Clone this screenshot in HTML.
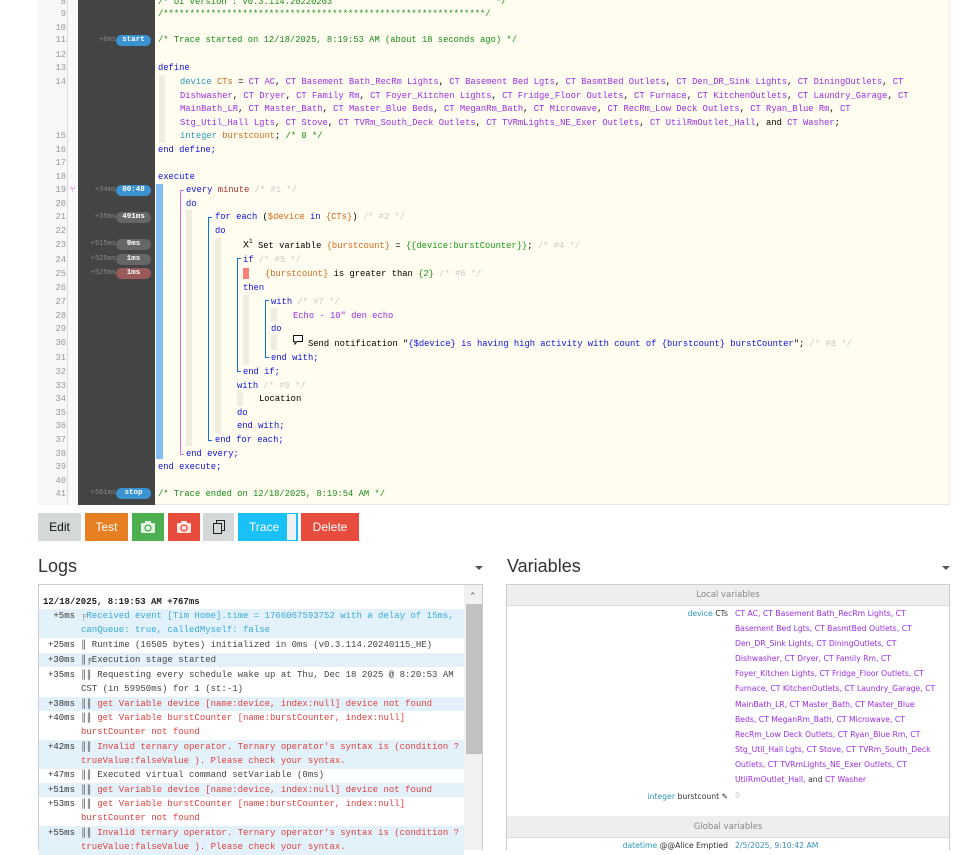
<!DOCTYPE html>
<html><head><meta charset="utf-8">
<style>
*{margin:0;padding:0;box-sizing:border-box}
body{width:976px;height:850px;background:#fff;position:relative;overflow:hidden;font-family:"Liberation Sans",sans-serif}
.a{position:absolute}
#code .l{position:absolute;font-family:"Liberation Mono",monospace;font-size:8.8px;line-height:12px;white-space:pre;color:#000}
.ln{position:absolute;left:38px;width:28px;text-align:right;font-family:"Liberation Mono",monospace;font-size:8.8px;color:#999;line-height:12px}
.k{color:#1010e0}.c{color:#1a8a1a}.d{color:#c8c8c8}.o{color:#d2691e}.p{color:#9a2ee6}.t{color:#2a9ab8}.m{color:#b03030}.g{color:#1a9a1a}
.bd{position:absolute;left:116px;width:35px;height:11px;border-radius:6px;color:#fff;font-family:"Liberation Mono",monospace;font-size:7.5px;font-weight:bold;text-align:center;line-height:11px}
.tm{position:absolute;width:40px;left:76px;text-align:right;font-family:"Liberation Mono",monospace;font-size:7px;color:#888;line-height:11px}
.btn{position:absolute;top:513px;height:28px;color:#fff;font-size:12px;line-height:28px;text-align:center}
.lr{position:absolute;left:39px;width:425px;font-family:"Liberation Mono",monospace;font-size:9px;line-height:14px;color:#444}
.lr .tt{position:absolute;left:0;width:36px;text-align:right;color:#333}
.lr .mm{margin-left:42px;display:block}
.b{background:#e3f2fa}
.r{color:#e04040}.cy{color:#3aaad8}
.vr{position:absolute;font-family:"DejaVu Sans",sans-serif;font-size:7.7px;line-height:15.1px;color:#333;white-space:nowrap}
.vp{color:#9a2ee6}
</style></head><body>
<div class="a" style="left:38px;top:0;width:912px;height:505px;background:#fffdf0;border-bottom:1px solid #e8e8e8;border-right:1px solid #eee"></div>
<div class="a" style="left:38px;top:0;width:29px;height:505px;background:#f7f7f7"></div>
<div class="a" style="left:67px;top:0;width:1px;height:505px;background:#ddd"></div>
<div class="a" style="left:68px;top:0;width:10px;height:505px;background:#fafafa"></div>
<div class="a" style="left:78px;top:0;width:77px;height:505px;background:#444"></div>
<div id="code">
<div class="a" style="left:156px;top:184px;width:7px;height:275px;background:#84bdf5"></div>
<div class="a" style="left:180px;top:190px;width:1px;height:264px;background:#e070e0"></div>
<div class="a" style="left:180px;top:190px;width:4px;height:1px;background:#e070e0"></div>
<div class="a" style="left:180px;top:454px;width:4px;height:1px;background:#e070e0"></div>
<div class="a" style="left:186px;top:210px;width:6px;height:236px;background:#f0ede0"></div>
<div class="a" style="left:208px;top:217px;width:1px;height:224px;background:#1070e0"></div>
<div class="a" style="left:208px;top:217px;width:4px;height:1px;background:#1070e0"></div>
<div class="a" style="left:208px;top:440px;width:4px;height:1px;background:#1070e0"></div>
<div class="a" style="left:215px;top:238px;width:6px;height:195px;background:#f0ede0"></div>
<div class="a" style="left:237px;top:258px;width:1px;height:113px;background:#1070e0"></div>
<div class="a" style="left:237px;top:258px;width:4px;height:1px;background:#1070e0"></div>
<div class="a" style="left:237px;top:371px;width:4px;height:1px;background:#1070e0"></div>
<div class="a" style="left:243px;top:268px;width:6px;height:11px;background:#ff8078"></div>
<div class="a" style="left:243px;top:295px;width:6px;height:70px;background:#f0ede0"></div>
<div class="a" style="left:265px;top:300px;width:1px;height:58px;background:#1070e0"></div>
<div class="a" style="left:265px;top:300px;width:4px;height:1px;background:#1070e0"></div>
<div class="a" style="left:265px;top:357px;width:4px;height:1px;background:#1070e0"></div>
<div class="a" style="left:271px;top:308px;width:6px;height:14px;background:#f0ede0"></div>
<div class="a" style="left:271px;top:335px;width:6px;height:15px;background:#f0ede0"></div>
<div class="a" style="left:237px;top:392px;width:6px;height:14px;background:#f0ede0"></div>
<div class="a" style="left:159px;top:75px;width:6px;height:68px;background:#f0ede0"></div>

<div class="ln" style="top:-4px">8</div><div class="l" style="left:158px;top:-4px"><span class="c">/* UI version : v0.3.114.20220203                               */</span></div>
<div class="ln" style="top:8px">9</div><div class="l" style="left:158px;top:8px"><span class="c">/*************************************************************/</span></div>
<div class="ln" style="top:22px">10</div>
<div class="ln" style="top:34px">11</div><div class="tm" style="top:35px">+0ms</div><div class="bd" style="top:35px;background:#3a92d0">start</div><div class="l" style="left:158px;top:34px"><span class="c">/* Trace started on 12/18/2025, 8:19:53 AM (about 18 seconds ago) */</span></div>
<div class="ln" style="top:49px">12</div>
<div class="ln" style="top:62px">13</div><div class="l" style="left:158px;top:62px"><span class="k">define</span></div>
<div class="ln" style="top:76px">14</div>
<div class="l" style="left:180px;top:76px"><span class="t">device</span> <span class="o">CTs</span> = <span class="p">CT AC</span>, <span class="p">CT Basement Bath_RecRm Lights</span>, <span class="p">CT Basement Bed Lgts</span>, <span class="p">CT BasmtBed Outlets</span>, <span class="p">CT Den_DR_Sink Lights</span>, <span class="p">CT DiningOutlets</span>, <span class="p">CT</span></div>
<div class="l" style="left:180px;top:90px"><span class="p">Dishwasher</span>, <span class="p">CT Dryer</span>, <span class="p">CT Family Rm</span>, <span class="p">CT Foyer_Kitchen Lights</span>, <span class="p">CT Fridge_Floor Outlets</span>, <span class="p">CT Furnace</span>, <span class="p">CT KitchenOutlets</span>, <span class="p">CT Laundry_Garage</span>, <span class="p">CT</span></div>
<div class="l" style="left:180px;top:103px"><span class="p">MainBath_LR</span>, <span class="p">CT Master_Bath</span>, <span class="p">CT Master_Blue Beds</span>, <span class="p">CT MeganRm_Bath</span>, <span class="p">CT Microwave</span>, <span class="p">CT RecRm_Low Deck Outlets</span>, <span class="p">CT Ryan_Blue Rm</span>, <span class="p">CT</span></div>
<div class="l" style="left:180px;top:117px"><span class="p">Stg_Util_Hall Lgts</span>, <span class="p">CT Stove</span>, <span class="p">CT TVRm_South_Deck Outlets</span>, <span class="p">CT TVRmLights_NE_Exer Outlets</span>, <span class="p">CT UtilRmOutlet_Hall</span>, and <span class="p">CT Washer</span>;</div>
<div class="ln" style="top:130px">15</div><div class="l" style="left:180px;top:130px"><span class="t">integer</span> <span class="o">burstcount</span>; <span class="c">/* 0 */</span></div>
<div class="ln" style="top:144px">16</div><div class="l" style="left:158px;top:144px"><span class="k">end define;</span></div>
<div class="ln" style="top:157px">17</div>
<div class="ln" style="top:171px">18</div><div class="l" style="left:158px;top:171px"><span class="k">execute</span></div>
<div class="ln" style="top:184px">19</div><div class="a" style="left:70px;top:184px;color:#d050d0;font-size:9px">⑂</div><div class="tm" style="top:185px">+34ms</div><div class="bd" style="top:185px;background:#3a92d0">00:48</div><div class="l" style="left:186px;top:184px"><span class="k">every</span> <span class="m">minute</span> <span class="d">/* #1 */</span></div>
<div class="ln" style="top:198px">20</div><div class="l" style="left:186px;top:198px"><span class="k">do</span></div>
<div class="ln" style="top:211px">21</div><div class="tm" style="top:212px">+35ms</div><div class="bd" style="top:212px;background:#666">491ms</div><div class="l" style="left:215px;top:211px"><span class="k">for each</span> (<span class="o">$device</span> <span class="k">in</span> <span class="o">{CTs}</span>) <span class="d">/* #2 */</span></div>
<div class="ln" style="top:225px">22</div><div class="l" style="left:215px;top:225px"><span class="k">do</span></div>
<div class="ln" style="top:239px">23</div><div class="tm" style="top:239px">+515ms</div><div class="bd" style="top:239px;background:#666">9ms</div><div class="l" style="left:243px;top:236px;font-size:10px">X<sup style="font-size:6px">1</sup></div><div class="l" style="left:258px;top:240px">Set variable <span class="o">{burstcount}</span> = <span class="g">{{device:burstCounter}}</span>; <span class="d">/* #4 */</span></div>
<div class="ln" style="top:254px">24</div><div class="tm" style="top:254px">+525ms</div><div class="bd" style="top:254px;background:#666">1ms</div><div class="l" style="left:243px;top:254px"><span class="k">if</span> <span class="d">/* #5 */</span></div>
<div class="ln" style="top:268px">25</div><div class="tm" style="top:268px">+525ms</div><div class="bd" style="top:268px;background:#9a5a5a">1ms</div><div class="l" style="left:265px;top:268px"><span class="o">{burstcount}</span> is greater than <span class="g">{2}</span> <span class="d">/* #6 */</span></div>
<div class="ln" style="top:282px">26</div><div class="l" style="left:243px;top:282px"><span class="k">then</span></div>
<div class="ln" style="top:296px">27</div><div class="l" style="left:271px;top:296px"><span class="k">with</span> <span class="d">/* #7 */</span></div>
<div class="ln" style="top:310px">28</div><div class="l" style="left:293px;top:310px"><span class="p">Echo - 10" den echo</span></div>
<div class="ln" style="top:323px">29</div><div class="l" style="left:271px;top:323px"><span class="k">do</span></div>
<div class="ln" style="top:337px">30</div>
<svg class="a" style="left:293px;top:335px" width="10" height="10" viewBox="0 0 10 10"><path d="M0.5 0.5H9.5V6.5H4L2 9V6.5H0.5Z" fill="#fff" stroke="#111" stroke-width="1"/></svg>
<div class="l" style="left:308px;top:338px">Send notification "<span class="k">{$device} is having high activity with count of {burstcount} burstCounter</span>"; <span class="d">/* #8 */</span></div>
<div class="ln" style="top:352px">31</div><div class="l" style="left:271px;top:352px"><span class="k">end with;</span></div>
<div class="ln" style="top:366px">32</div><div class="l" style="left:243px;top:366px"><span class="k">end if;</span></div>
<div class="ln" style="top:380px">33</div><div class="l" style="left:237px;top:380px"><span class="k">with</span> <span class="d">/* #9 */</span></div>
<div class="ln" style="top:393px">34</div><div class="l" style="left:259px;top:393px">Location</div>
<div class="ln" style="top:407px">35</div><div class="l" style="left:237px;top:407px"><span class="k">do</span></div>
<div class="ln" style="top:420px">36</div><div class="l" style="left:237px;top:420px"><span class="k">end with;</span></div>
<div class="ln" style="top:434px">37</div><div class="l" style="left:215px;top:434px"><span class="k">end for each;</span></div>
<div class="ln" style="top:448px">38</div><div class="l" style="left:186px;top:448px"><span class="k">end every;</span></div>
<div class="ln" style="top:461px">39</div><div class="l" style="left:158px;top:461px"><span class="k">end execute;</span></div>
<div class="ln" style="top:475px">40</div>
<div class="ln" style="top:488px">41</div><div class="tm" style="top:488px">+561ms</div><div class="bd" style="top:488px;background:#3a92d0">stop</div><div class="l" style="left:158px;top:488px"><span class="c">/* Trace ended on 12/18/2025, 8:19:54 AM */</span></div>
</div>

<div class="btn" style="left:38px;width:43px;background:#d5d8d8;color:#111">Edit</div>
<div class="btn" style="left:85px;width:43px;background:#e67e22">Test</div>
<div class="btn" style="left:132px;width:32px;background:#4caf50"><svg width="14" height="12" viewBox="0 0 14 12" style="margin-top:8px"><rect x="0" y="2" width="14" height="10" rx="1" fill="#fff" opacity=".85"/><rect x="4" y="0" width="6" height="3" fill="#fff" opacity=".85"/><circle cx="7" cy="7" r="3" fill="none" stroke="#4caf50" stroke-width="1.3"/></svg></div>
<div class="btn" style="left:168px;width:32px;background:#e74c3c"><svg width="14" height="12" viewBox="0 0 14 12" style="margin-top:8px"><rect x="0" y="2" width="14" height="10" rx="1" fill="#fff" opacity=".85"/><rect x="4" y="0" width="6" height="3" fill="#fff" opacity=".85"/><circle cx="7" cy="7" r="3" fill="none" stroke="#e74c3c" stroke-width="1.3"/></svg></div>
<div class="btn" style="left:203px;width:31px;background:#d5d8d8"><svg width="12" height="14" viewBox="0 0 12 14" style="margin-top:7px"><rect x="3.5" y="0.5" width="8" height="10" fill="none" stroke="#222"/><rect x="0.5" y="3.5" width="8" height="10" fill="#d5d8d8" stroke="#222"/></svg></div>
<div class="btn" style="left:238px;width:60px;background:#1ac0f8;text-align:left;padding-left:11px">Trace<div class="a" style="left:49px;top:1px;width:9px;height:26px;background:#edf1f4"></div></div>
<div class="btn" style="left:301px;width:58px;background:#e74c3c">Delete</div>

<div class="a" style="left:38px;top:556px;font-size:18px;color:#333">Logs</div>
<div class="a" style="left:475px;top:566px;width:0;height:0;border-left:4px solid transparent;border-right:4px solid transparent;border-top:4px solid #555"></div>
<div class="a" style="left:38px;top:584px;width:445px;height:266px;border:1px solid #ccc;border-bottom:none;overflow:hidden">
<div class="a" style="left:425px;top:0;width:18px;height:266px;background:#f1f1f1"></div>
<div class="a" style="left:427px;top:19px;width:16px;height:150px;background:#c1c1c1"></div>
<div class="a" style="left:430px;top:6px;font-size:9px;color:#555">⌃</div>
</div>
<div class="lr" style="top:595px;font-weight:bold;color:#222;padding-left:4px">12/18/2025, 8:19:53 AM +767ms</div>
<div class="lr b" style="top:609px;height:29px"><span class="tt">+5ms</span><span class="mm cy"><span style="color:#888">╒</span>Received event [Tim Home].time = 1766067593752 with a delay of 15ms, canQueue: true, calledMyself: false</span></div>
<div class="lr" style="top:638px"><span class="tt">+25ms</span><span class="mm">║ Runtime (16505 bytes) initialized in 0ms (v0.3.114.20240115_HE)</span></div>
<div class="lr b" style="top:653px"><span class="tt">+30ms</span><span class="mm">║╒Execution stage started</span></div>
<div class="lr" style="top:668px"><span class="tt">+35ms</span><span class="mm">║║ Requesting every schedule wake up at Thu, Dec 18 2025 @ 8:20:53 AM CST (in 59950ms) for 1 (st:-1)</span></div>
<div class="lr b" style="top:697px"><span class="tt">+38ms</span><span class="mm">║║ <span class="r">get Variable device [name:device, index:null] device not found</span></span></div>
<div class="lr" style="top:711px"><span class="tt">+40ms</span><span class="mm">║║ <span class="r">get Variable burstCounter [name:burstCounter, index:null] burstCounter not found</span></span></div>
<div class="lr b" style="top:740px;height:29px"><span class="tt">+42ms</span><span class="mm">║║ <span class="r">Invalid ternary operator. Ternary operator's syntax is (condition ? trueValue:falseValue ). Please check your syntax.</span></span></div>
<div class="lr" style="top:768px"><span class="tt">+47ms</span><span class="mm">║║ Executed virtual command setVariable (0ms)</span></div>
<div class="lr b" style="top:783px"><span class="tt">+51ms</span><span class="mm">║║ <span class="r">get Variable device [name:device, index:null] device not found</span></span></div>
<div class="lr" style="top:797px"><span class="tt">+53ms</span><span class="mm">║║ <span class="r">get Variable burstCounter [name:burstCounter, index:null] burstCounter not found</span></span></div>
<div class="lr b" style="top:826px;height:29px"><span class="tt">+55ms</span><span class="mm">║║ <span class="r">Invalid ternary operator. Ternary operator's syntax is (condition ? trueValue:falseValue ). Please check your syntax.</span></span></div>

<div class="a" style="left:507px;top:556px;font-size:18px;color:#333">Variables</div>
<div class="a" style="left:942px;top:566px;width:0;height:0;border-left:4px solid transparent;border-right:4px solid transparent;border-top:4px solid #555"></div>
<div class="a" style="left:506px;top:584px;width:444px;height:266px;border:1px solid #ccc;border-bottom:none"></div>
<div class="a" style="left:507px;top:585px;width:442px;height:21px;background:#eee;border-bottom:1px solid #ddd;text-align:center;font-family:'DejaVu Sans',sans-serif;font-size:8.5px;line-height:21px;color:#888">Local variables</div>
<div class="vr" style="left:520px;top:606px;width:208px;text-align:right"><span class="t">device</span> CTs</div>
<div class="vr vp" style="left:735px;top:606px">CT AC, CT Basement Bath_RecRm Lights, CT<br>Basement Bed Lgts, CT BasmtBed Outlets, CT<br>Den_DR_Sink Lights, CT DiningOutlets, CT<br>Dishwasher, CT Dryer, CT Family Rm, CT<br>Foyer_Kitchen Lights, CT Fridge_Floor Outlets, CT<br>Furnace, CT KitchenOutlets, CT Laundry_Garage, CT<br>MainBath_LR, CT Master_Bath, CT Master_Blue<br>Beds, CT MeganRm_Bath, CT Microwave, CT<br>RecRm_Low Deck Outlets, CT Ryan_Blue Rm, CT<br>Stg_Util_Hall Lgts, CT Stove, CT TVRm_South_Deck<br>Outlets, CT TVRmLights_NE_Exer Outlets, CT<br>UtilRmOutlet_Hall, <span style="color:#333">and</span> CT Washer</div>
<div class="vr" style="left:520px;top:789px;width:208px;text-align:right"><span class="t">integer</span> burstcount ✎</div>
<div class="vr" style="left:735px;top:788px;color:#ccc">0</div>
<div class="a" style="left:507px;top:816px;width:442px;height:22px;background:#eee;border-bottom:1px solid #ddd;text-align:center;font-family:'DejaVu Sans',sans-serif;font-size:8.5px;line-height:22px;color:#888">Global variables</div>
<div class="vr" style="left:520px;top:838px;width:208px;text-align:right"><span class="t">datetime</span> @@Alice Emptied</div>
<div class="vr" style="left:735px;top:838px;color:#3a8fc0">2/5/2025, 9:10:42 AM</div>
</body></html>
